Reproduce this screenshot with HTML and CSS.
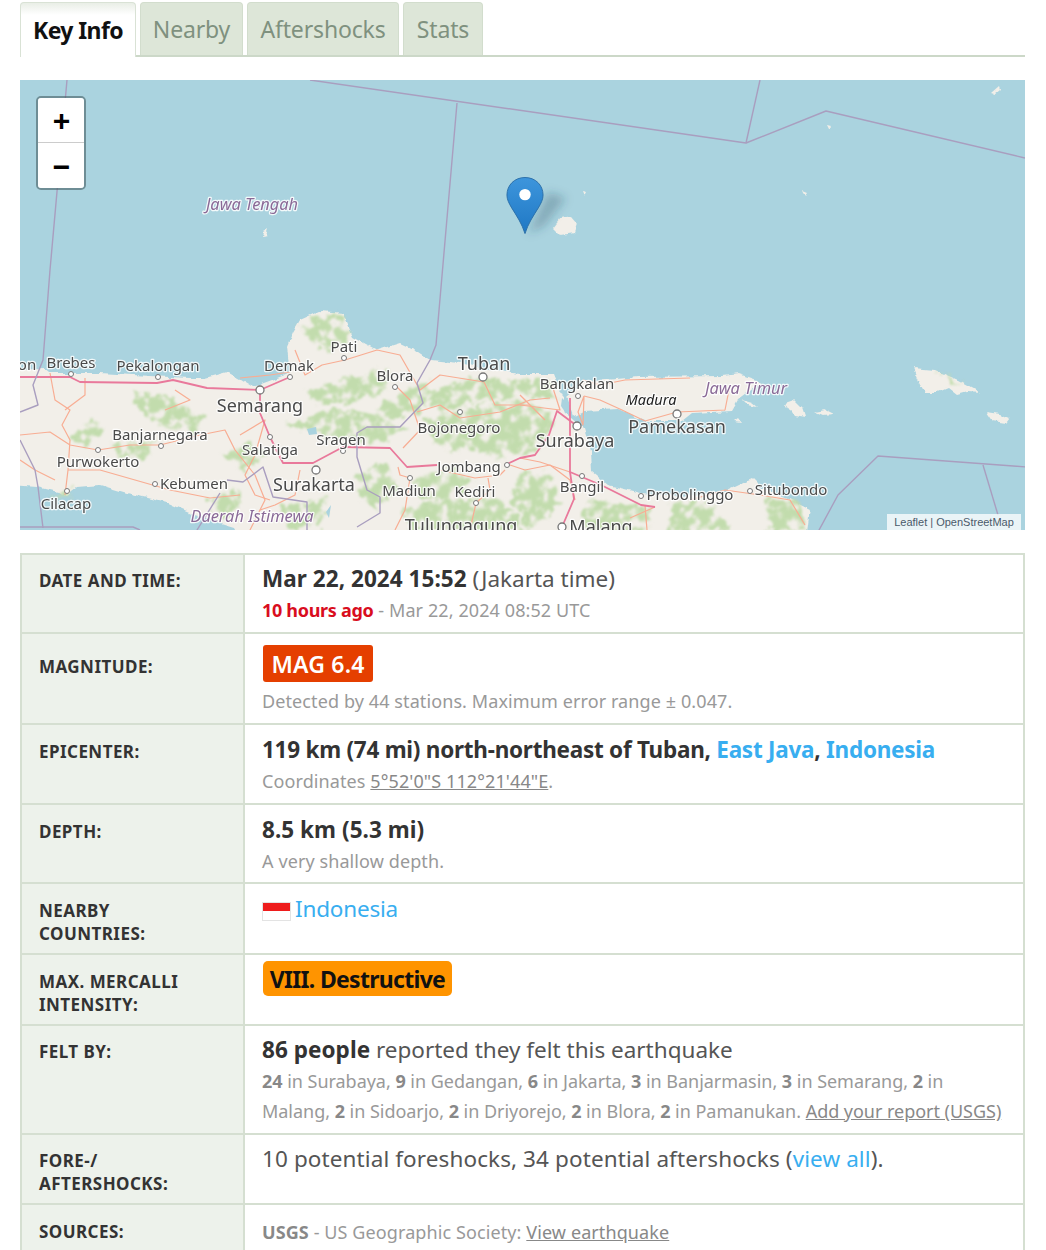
FILE: index.html
```html
<!DOCTYPE html>
<html lang="en">
<head>
<meta charset="utf-8">
<title>Earthquake Key Info</title>
<link rel="stylesheet" href="styles.css">
</head>
<body>
<div class="page">
  <nav class="tabs">
    <a class="tab tab-active">Key Info</a>
    <a class="tab tab-nearby">Nearby</a>
    <a class="tab tab-after">Aftershocks</a>
    <a class="tab tab-stats">Stats</a>
  </nav>

  <div class="map">
    <svg class="map-svg" width="1005" height="450" viewBox="20 80 1005 450" xmlns="http://www.w3.org/2000/svg">
      <defs>
        <filter id="coast" x="-5%" y="-5%" width="110%" height="110%">
          <feTurbulence type="fractalNoise" baseFrequency="0.09" numOctaves="3" seed="4" result="n"/>
          <feDisplacementMap in="SourceGraphic" in2="n" scale="6" xChannelSelector="R" yChannelSelector="G"/>
          <feGaussianBlur stdDeviation="0.5"/>
        </filter>
        <filter id="woods" x="-5%" y="-5%" width="110%" height="110%" color-interpolation-filters="sRGB">
          <feTurbulence type="fractalNoise" baseFrequency="0.1" numOctaves="4" seed="9" result="n"/>
          <feColorMatrix in="n" type="matrix" values="0 0 0 0 0  0 0 0 0 0  0 0 0 0 0  5 0 0 0 -1.6" result="holes"/>
          <feDisplacementMap in="SourceGraphic" in2="n" scale="16" xChannelSelector="G" yChannelSelector="B" result="d"/>
          <feComposite in="d" in2="holes" operator="in"/>
          <feGaussianBlur stdDeviation="0.8"/>
        </filter>
        <filter id="pin-shadow" x="-40%" y="-40%" width="180%" height="180%">
          <feGaussianBlur stdDeviation="5"/>
        </filter>
      </defs>
      <rect class="water" x="20" y="80" width="1005" height="450"/>
      <!-- land -->
      <g class="coastline">
        <path class="land" d="M10 370 L45 369 L50 373 L100 373 L150 376 L190 378 L205 378 L227 372 L240 379 L253 387 L272 380 L290 373 L287 347 L293 332 L300 320 L320 311 L343 313 L350 330 L353 337 L377 350 L400 343 L415 350 L430 360 L460 363 L490 370 L520 374 L554 374 L564 398 L564 411 L584 428 L591 451 L592 472 L608 485 L641 493 L680 496 L722 492 L752 478 L762 488 L789 499 L810 509 L806 540 L240 540 L233 527 L200 517 L167 503 L127 493 L100 485 L77 487 L67 495 L57 492 L37 487 L10 485 Z"/>
        <path class="land" d="M567 397 L584 382 L638 377 L722 376 L739 374 L762 382 L739 399 L732 411 L692 413 L682 421 L645 421 L618 409 L584 411 L574 416 Z"/>
        <path class="land" d="M553 228 L560 219 L571 217 L577 224 L574 233 L560 235 Z"/>
        <path class="land" d="M785 403 L794 400 L802 408 L805 417 L793 415 Z"/>
        <path class="land" d="M742 400 L752 403 L757 407 L747 405 Z"/>
        <path class="land" d="M734 421 L738 418 L741 422 Z"/>
        <path class="land" d="M815 412 L825 410 L833 414 L822 415 Z"/>
        <path class="land" d="M913 368 L935 370 L958 380 L982 393 L968 392 L957 395 L948 388 L936 393 L925 393 L918 380 Z"/>
        <path class="land" d="M987 412 L1000 414 L1010 418 L1006 423 L993 421 Z"/>
        <path class="land" d="M803 191 L808 193 L806 196 Z"/>
        <path class="land" d="M581 191 L585 192 L583 196 Z"/>
        <path class="land" d="M827 125 L831 126 L829 129 Z"/>
        <path class="land" d="M991 94 L999 87 L1000 90 L994 95 Z"/>
        <path class="land" d="M263 232 L268 229 L266 236 L262 237 Z"/>
      </g>
      <!-- forest -->
      <g class="forest">
        <path d="M135 392 L170 398 L205 418 L195 432 L160 425 L140 412 Z"/>
        <path d="M72 438 L92 418 L105 428 L90 442 L78 445 Z"/>
        <path d="M305 392 L345 378 L390 370 L385 392 L340 404 L315 402 Z"/>
        <path d="M298 325 L340 312 L350 335 L335 350 L318 350 Z"/>
        <path d="M370 415 L405 390 L430 378 L425 408 L395 420 Z"/>
        <path d="M285 425 L340 408 L375 415 L410 430 L370 445 L330 435 Z"/>
        <path d="M425 395 L470 378 L520 380 L550 395 L480 400 L440 412 Z"/>
        <path d="M420 418 L480 405 L530 400 L555 415 L545 448 L500 458 L440 445 Z"/>
        <path d="M412 480 L450 468 L475 480 L455 498 L420 498 Z"/>
        <path d="M405 508 L450 498 L505 500 L525 530 L410 532 Z"/>
        <path d="M520 470 L552 475 L558 510 L530 530 L510 500 Z"/>
        <path d="M355 475 L388 462 L398 490 L375 510 L360 498 Z"/>
        <path d="M672 505 L710 500 L730 530 L665 532 Z"/>
        <path d="M765 498 L800 503 L808 530 L770 532 Z"/>
        <path d="M222 455 L252 442 L265 455 L245 473 Z"/>
        <path d="M208 500 L238 488 L243 505 L215 522 Z"/>
        <path d="M282 505 L328 498 L322 528 L288 528 Z"/>
        <path d="M110 445 L152 440 L147 458 L118 458 Z"/>
        <path d="M585 500 L655 508 L645 532 L585 532 Z"/>
        <path d="M560 400 L545 378 L525 380 L530 395 Z"/>
        <path d="M50 495 L72 490 L70 498 Z"/>
        <path d="M936 371 L950 376 L962 383 L950 381 Z"/>
      </g>
      <!-- small water bodies -->
      <path class="water" d="M307 429 L316 427 L317 434 L309 435 Z"/>
      <path class="water" d="M326 512 L331 505 L329 518 Z"/>
      <path class="water" d="M562 398 L566 402 L565 412 L561 406 Z"/>
      <!-- minor roads -->
      <g class="roads">
        <path d="M50 373 L55 400 L70 410 L62 425 L70 440 L68 470 L65 495"/>
        <path d="M85 378 L85 395 L65 410"/>
        <path d="M20 435 L50 432 L70 445 L98 450 L130 445 L160 445 L200 435 L225 430 L235 450 L255 475 L265 500 L250 530"/>
        <path d="M68 470 L100 470 L135 480 L170 490 L210 498 L240 495"/>
        <path d="M240 435 L265 420 L255 455 L245 475 L255 495 L270 500"/>
        <path d="M295 350 L305 375 L322 365 L345 360 L377 350 L400 355 L420 390 L440 375 L484 382 L495 405 L530 405"/>
        <path d="M417 412 L440 405 L460 418 L500 412 L530 400 L550 398"/>
        <path d="M403 448 L420 430 L410 400 L395 385"/>
        <path d="M398 467 L400 475 L410 478 L405 510 L395 530"/>
        <path d="M488 478 L490 490 L476 503 L470 530"/>
        <path d="M300 470 L295 495 L275 505 L260 510"/>
        <path d="M520 458 L540 462 L570 472"/>
        <path d="M510 465 L525 470 L550 465 L570 480 L575 500"/>
        <path d="M584 396 L600 400 L622 410 L645 421 L677 412 L725 410 L730 385"/>
        <path d="M584 396 L578 412 L583 425 L584 396"/>
        <path d="M552 385 L560 410 L520 405"/>
        <path d="M655 507 L630 518"/>
        <path d="M645 505 L647 530"/>
        <path d="M690 500 L725 490 L760 495 L790 500 L805 525"/>
        <path d="M175 390 L190 400 L165 410"/>
        <path d="M520 395 L545 420"/>
        <path d="M20 460 L35 470 L55 480"/>
        <path d="M440 470 L475 478 L500 475 L505 470"/>
        <path d="M240 378 L270 375 L290 372"/>
        <path d="M583 380 L600 385 L625 380 L690 378"/>
      </g>
      <!-- motorways -->
      <g class="motorway">
        <path d="M20 377 L70 377 L80 382 L157 383 L173 380 L207 388 L260 390 L290 377"/>
        <path d="M260 390 L260 413 L270 437 L283 463 L313 463 L343 447 L390 448 L407 467 L437 465"/>
        <path d="M505 465 L520 458 L535 455 L549 435 L557 411 L577 426"/>
        <path d="M570 398 L570 445 L570 472 L601 485 L641 505 L655 507"/>
        <path d="M570 472 L574 499 L562 527"/>
      </g>
      <!-- boundaries -->
      <g class="boundary">
        <path d="M310 80 L746 143 L826 111 L1025 158"/>
        <path d="M760 80 L746 143"/>
        <path d="M457 103 L436 345 L430 360 L417 383 L423 403 L400 427 L367 427 L357 433 L357 457 L367 490 L380 497 L380 513 L357 527"/>
        <path d="M67 80 L50 270 L43 360 L33 385 L38 405 L20 412"/>
        <path d="M20 440 L35 470 L38 487 L43 528"/>
        <path d="M20 527 L133 527 L140 530"/>
        <path d="M818 532 L838 495 L878 456 L1027 467"/>
        <path d="M983 465 L998 515"/>
        <path d="M227 480 L243 482 L263 467 L273 497 L307 502 L307 530"/>
        <path d="M220 493 L197 530"/>
      </g>
      <!-- places -->
      <g class="place">
        <circle cx="71" cy="374" r="2.5"/><circle cx="158" cy="377" r="2.5"/><circle cx="344" cy="358" r="2.5"/>
        <circle cx="290" cy="377" r="2.5"/><circle cx="395" cy="387" r="2.5"/><circle cx="460" cy="412" r="2.5"/>
        <circle cx="161" cy="446" r="2.5"/><circle cx="98" cy="450" r="2.5"/><circle cx="270" cy="437" r="2.5"/>
        <circle cx="343" cy="451" r="2.5"/><circle cx="155" cy="484" r="2.5"/><circle cx="67" cy="491" r="2.5"/>
        <circle cx="410" cy="478" r="2.5"/><circle cx="476" cy="503" r="2.5"/><circle cx="507" cy="465" r="2.5"/>
        <circle cx="578" cy="396" r="2.5"/><circle cx="582" cy="476" r="2.5"/><circle cx="641" cy="496" r="2.5"/>
        <circle cx="750" cy="491" r="2.5"/>
        <circle class="city" cx="260" cy="390" r="4"/><circle class="city" cx="483" cy="377" r="4"/>
        <circle class="city" cx="316" cy="470" r="4"/><circle class="city" cx="577" cy="426" r="4"/>
        <circle class="city" cx="677" cy="414" r="4"/><circle class="city" cx="562" cy="527" r="4"/>
      </g>
      <!-- labels -->
      <g class="labels">
        <text x="27" y="370">on</text>
        <text x="71" y="368">Brebes</text>
        <text x="158" y="371">Pekalongan</text>
        <text x="344" y="352">Pati</text>
        <text x="289" y="371">Demak</text>
        <text x="395" y="381">Blora</text>
        <text x="160" y="440">Banjarnegara</text>
        <text x="270" y="455">Salatiga</text>
        <text x="341" y="445">Sragen</text>
        <text x="459" y="433">Bojonegoro</text>
        <text x="577" y="389">Bangkalan</text>
        <text x="98" y="467">Purwokerto</text>
        <text x="194" y="489">Kebumen</text>
        <text x="409" y="496">Madiun</text>
        <text x="475" y="497">Kediri</text>
        <text x="469" y="472">Jombang</text>
        <text x="582" y="492">Bangil</text>
        <text x="690" y="500">Probolinggo</text>
        <text x="791" y="495">Situbondo</text>
        <text x="66" y="509">Cilacap</text>
        <text class="lbl-lg" x="484" y="370">Tuban</text>
        <text class="lbl-lg" x="260" y="412">Semarang</text>
        <text class="lbl-lg" x="677" y="433">Pamekasan</text>
        <text class="lbl-lg" x="575" y="447">Surabaya</text>
        <text class="lbl-lg" x="314" y="491">Surakarta</text>
        <text class="lbl-lg" x="461" y="532">Tulungagung</text>
        <text class="lbl-lg" x="601" y="533">Malang</text>
        <text class="lbl-island" x="651" y="405">Madura</text>
        <text class="lbl-region" x="746" y="394">Jawa Timur</text>
        <text class="lbl-region" x="252" y="522">Daerah Istimewa</text>
        <text class="lbl-region" x="252" y="210">Jawa Tengah</text>
      </g>
      <!-- marker shadow -->
      <path class="pin-shadow" d="M528 234 L548 192 L566 198 L544 226 Z"/>
    </svg>

    <div class="zoom">
      <button class="zoom-btn zoom-in" type="button">+</button>
      <button class="zoom-btn" type="button">&#8722;</button>
    </div>

    <svg class="marker" width="38" height="60" viewBox="0 0 40 62" xmlns="http://www.w3.org/2000/svg">
      <defs>
        <linearGradient id="pin" x1="0" y1="0" x2="0" y2="1">
          <stop offset="0" stop-color="#3d95dc"/>
          <stop offset="1" stop-color="#1f78c4"/>
        </linearGradient>
      </defs>
      <path class="marker-body" fill="url(#pin)" d="M20 1 C9 1 1 9 1 19.5 C1 24 3 28 6 33 C11 41 17 50 20 60 C23 50 29 41 34 33 C37 28 39 24 39 19.5 C39 9 31 1 20 1 Z"/>
      <circle class="marker-dot" cx="20" cy="19" r="6"/>
    </svg>

    <div class="attribution"><a>Leaflet</a> | <a>OpenStreetMap</a></div>
  </div>

  <table class="info">
    <tbody>
      <tr class="row-79">
        <th>Date and time:</th>
        <td>
          <div class="main"><b>Mar 22, 2024 15:52</b> (Jakarta time)</div>
          <div class="sub"><b class="ago">10 hours ago</b> - Mar 22, 2024 08:52 UTC</div>
        </td>
      </tr>
      <tr class="row-91 row-shift">
        <th class="th-mag">Magnitude:</th>
        <td class="td-badge">
          <div class="badge-row"><span class="badge badge-mag">MAG 6.4</span></div>
          <div class="sub">Detected by 44 stations. Maximum error range ± 0.047.</div>
        </td>
      </tr>
      <tr class="row-80 row-shift">
        <th>Epicenter:</th>
        <td>
          <div class="main"><b class="epic">119 km (74 mi) north-northeast of Tuban, <a class="link">East Java</a>, <a class="link">Indonesia</a></b></div>
          <div class="sub">Coordinates <a class="plain">5°52'0"S 112°21'44"E</a>.</div>
        </td>
      </tr>
      <tr class="row-79 row-shift">
        <th>Depth:</th>
        <td>
          <div class="main"><b>8.5 km (5.3 mi)</b></div>
          <div class="sub">A very shallow depth.</div>
        </td>
      </tr>
      <tr class="row-71 row-shift">
        <th>Nearby<br>countries:</th>
        <td>
          <div class="main main-country"><span class="flag"></span><a class="link">Indonesia</a></div>
        </td>
      </tr>
      <tr class="row-71 row-shift">
        <th>Max. Mercalli<br>intensity:</th>
        <td class="td-badge td-mmi">
          <div class="badge-row"><span class="badge badge-mmi">VIII. Destructive</span></div>
        </td>
      </tr>
      <tr class="row-109">
        <th>Felt by:</th>
        <td>
          <div class="main"><b>86 people</b> reported they felt this earthquake</div>
          <div class="sub sub-felt"><b>24</b> in Surabaya, <b>9</b> in Gedangan, <b>6</b> in Jakarta, <b>3</b> in Banjarmasin, <b>3</b> in Semarang, <b>2</b> in<br>Malang, <b>2</b> in Sidoarjo, <b>2</b> in Driyorejo, <b>2</b> in Blora, <b>2</b> in Pamanukan. <a class="plain">Add your report (USGS)</a></div>
        </td>
      </tr>
      <tr class="row-70">
        <th>Fore-/<br>aftershocks:</th>
        <td>
          <div class="main main-fore">10 potential foreshocks, 34 potential aftershocks (<a class="link">view all</a>).</div>
        </td>
      </tr>
      <tr>
        <th class="th-src">Sources:</th>
        <td>
          <div class="sub sub-source"><b>USGS</b> - US Geographic Society: <a class="plain">View earthquake</a></div>
          <div class="tail"></div>
        </td>
      </tr>
    </tbody>
  </table>
</div>
</body>
</html>
```
FILE: styles.css
```css
html, body {
  margin: 0;
  padding: 0;
  height: 1250px;
  overflow: hidden;
  background: #fff;
}

.page {
  padding: 2px 21px 0 20px;
  font-family: "Noto Sans", "Open Sans", sans-serif;
  color: #333;
}

/* Tabs */
.tabs {
  display: flex;
  gap: 4px;
  height: 53px;
  border-bottom: 2px solid #ccd8c8;
  margin-bottom: 23px;
}

.tab {
  display: flex;
  align-items: center;
  justify-content: center;
  height: 53px;
  box-sizing: border-box;
  border: 1px solid #d2ddcd;
  border-bottom: 0;
  border-radius: 4px 4px 0 0;
  background: #dde6d8;
  color: #7f917f;
  font-size: 23px;
  letter-spacing: -0.15px;
}
.tab-nearby { width: 103px; }
.tab-after { width: 152px; }
.tab-stats { width: 80px; }

.tab-active {
  width: 116px;
  height: 55px;
  background: linear-gradient(#e9eee6 0, #fff 12px);
  border-color: #d9e2d5;
  color: #111;
  font-weight: 700;
  letter-spacing: -0.6px;
}

/* Map */
.map {
  position: relative;
  height: 450px;
  overflow: hidden;
  background: #aad3df;
}

.map-svg {
  display: block;
  filter: blur(0.5px);
}

.water { fill: #aad3df; }
.coastline { filter: url(#coast); }
.land { fill: #f2efe9; }
.forest { filter: url(#woods); }
.forest path { fill: #c2dcad; }
.roads path { fill: none; stroke: #f8ad93; stroke-width: 1.2; stroke-linejoin: round; }
.motorway path { fill: none; stroke: #e9799b; stroke-width: 1.8; stroke-linejoin: round; }
.boundary path { fill: none; stroke: #a99ebf; stroke-width: 1.4; stroke-linejoin: round; }
.place circle { fill: #fff; stroke: #777; stroke-width: 1; }
.place .city { stroke-width: 1.3; }
.pin-shadow { fill: rgba(40, 70, 90, .28); filter: url(#pin-shadow); }

.labels text {
  font-family: "Noto Sans", sans-serif;
  font-size: 15px;
  fill: #4a4a4a;
  text-anchor: middle;
  stroke: rgba(255, 255, 255, .85);
  stroke-width: 2.5px;
  paint-order: stroke;
  stroke-linejoin: round;
}
.labels .lbl-lg { font-size: 18px; }
.labels .lbl-island { font-style: italic; fill: #222; font-size: 14.5px; }
.labels .lbl-region { font-style: italic; fill: #8a6a97; font-size: 16.4px; }

/* Zoom control */
.zoom {
  position: absolute;
  left: 16px;
  top: 16px;
  display: flex;
  flex-direction: column;
  width: 46px;
  border: 2px solid rgba(70, 95, 100, .6);
  border-radius: 5px;
  background-clip: padding-box;
  overflow: hidden;
}

.zoom-btn {
  display: flex;
  align-items: center;
  justify-content: center;
  width: 46px;
  height: 45px;
  padding: 2px 0 0 1px;
  border: 0;
  background: #fff;
  color: #000;
  font: 700 30px/1 "Liberation Sans", sans-serif;
}
.zoom-in { border-bottom: 1px solid #ccc; }

/* Marker */
.marker {
  position: absolute;
  left: 486px;
  top: 96px;
}
.marker-body { stroke: #2a6ea8; stroke-width: 1; }
.marker-dot { fill: #fff; }

/* Attribution */
.attribution {
  position: absolute;
  right: 4px;
  bottom: 0;
  width: 134px;
  height: 16px;
  text-align: center;
  background: rgba(255, 255, 255, .75);
  color: #4a5a6a;
  font: 11px/16px "Liberation Sans", sans-serif;
}
.attribution a { color: #4a5a6a; }

/* Table */
.info {
  width: 100%;
  margin-top: 23px;
  border-collapse: collapse;
  border: 2px solid #d5dfd1;
  table-layout: fixed;
}

.row-70 { height: 70px; }
.row-71 { height: 71px; }
.row-79 { height: 79px; }
.row-80 { height: 80px; }
.row-91 { height: 91px; }
.row-109 { height: 109px; }

.info th, .info td {
  border: 2px solid #d5dfd1;
  vertical-align: top;
  text-align: left;
}

.info th {
  width: 187px;
  padding: 15px 17px 4px;
  background: #edf2eb;
  color: #333;
  font-size: 17px;
  line-height: 22.5px;
  font-weight: 700;
  text-transform: uppercase;
  letter-spacing: 0.45px;
}

.info td {
  padding: 9px 17px 4px;
}

.info .row-shift th { padding-top: 16px; }
.info .row-shift td { padding-top: 10px; }
.info .row-shift .th-mag { padding-top: 22px; }
.info .th-src { padding-top: 16px; }

.main {
  font-size: 22.5px;
  line-height: 30.5px;
  letter-spacing: 0;
  color: #555;
  white-space: nowrap;
}
.main b { color: #333; font-weight: 700; letter-spacing: 0.05px; }
.main .epic { letter-spacing: -0.25px; }
.main-fore { letter-spacing: 0.1px; }
.main-country { letter-spacing: -0.2px; }

.sub {
  font-size: 18px;
  line-height: 30.5px;
  letter-spacing: 0.1px;
  color: #999;
  white-space: nowrap;
}
.sub b { font-weight: 700; color: #888; }
.sub .ago { color: #d90d1e; letter-spacing: -0.3px; }
.sub-felt { letter-spacing: -0.03px; }
.sub-source { padding-top: 3px; }

.tail { height: 40px; }

.link { color: #38aef0; }
.plain { color: #888; text-decoration: underline; }

.info .row-shift .td-badge { padding-top: 11px; }
.info .row-shift .td-mmi { padding-top: 6px; }

.badge-row {
  display: flex;
  height: 37px;
  margin: 0 0 4px 1px;
}
.td-mmi .badge-row { height: 35px; }

.badge {
  display: flex;
  align-items: center;
  justify-content: center;
  box-sizing: border-box;
  border-radius: 3px;
  font-size: 23px;
  white-space: nowrap;
}
.badge-mag { background: #e53f00; color: #fff; width: 110px; font-weight: 600; letter-spacing: 0.2px; }
.badge-mmi { background: #ff9400; color: #111; font-weight: 700; border-radius: 5px; width: 189px; letter-spacing: -0.7px; }

.flag {
  display: inline-block;
  width: 29px;
  height: 19px;
  box-sizing: border-box;
  margin-right: 4px;
  vertical-align: -4px;
  border: 1px solid #e3e3e3;
  background: linear-gradient(#ee1c1c 0 50%, #fff 50% 100%);
}
```
